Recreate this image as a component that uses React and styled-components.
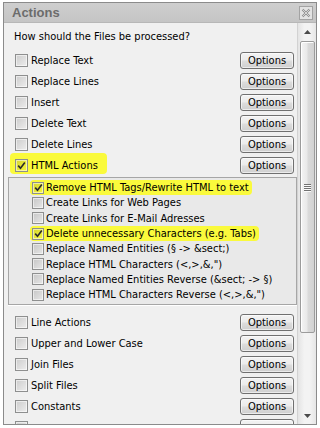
import React from "react"
import styled, { createGlobalStyle } from "styled-components"

const GlobalStyle = createGlobalStyle`
  *, *::before, *::after {
    box-sizing: border-box;
  }
  html, body {
    margin: 0;
    background: #fff;
  }
  body {
    font-family: "DejaVu Sans Condensed", "Liberation Sans", Arial, sans-serif;
    font-size: 11px;
    color: #000;
  }
`

const Window = styled.div`
  margin: 2px 0 0 3px;
  width: 314px;
  height: 423px;
  border: 1px solid #8b8b8b;
  background: #f0f0f0;
  display: flex;
  flex-direction: column;
  overflow: hidden;
`

const TitleBar = styled.div`
  height: 20px;
  flex: none;
  display: flex;
  align-items: center;
  justify-content: space-between;
  padding: 0 3px 0 8px;
  background: linear-gradient(#cecece, #c5c5c5);
  border-bottom: 1px solid #b7b7b7;
`

const Title = styled.span`
  font-family: "Liberation Sans", Arial, sans-serif;
  font-size: 13px;
  font-weight: bold;
  color: #6c6c6c;
`

const Body = styled.div`
  flex: 1;
  min-height: 0;
  display: flex;
`

const Content = styled.div`
  flex: 1;
  overflow: hidden;
  padding: 7px 3px 0 10px;
  border-right: 1px solid #d2d2d2;
`

const Heading = styled.div`
  line-height: 13px;
  margin-bottom: 7px;
`

const Row = styled.div`
  height: 21px;
  flex: none;
  display: flex;
  align-items: center;
  justify-content: space-between;
  padding-left: 1px;
`

const Mark = styled.span`
  display: inline-flex;
  align-items: center;
  gap: ${p => p.$gap}px;
  ${p =>
    p.$on &&
    `
    background: #fafa3c;
    border-radius: 4px;
    padding: ${p.$pad};
    margin: ${p.$neg};
  `}
`

const Box = styled.span`
  width: ${p => p.$size}px;
  height: ${p => p.$size}px;
  flex: none;
  border: 1px solid #8e8f8f;
  background: linear-gradient(135deg, rgba(0, 0, 0, 0.15), rgba(0, 0, 0, 0.01));
  box-shadow: inset 0 0 0 1px rgba(255, 255, 255, 0.55);
  display: flex;
  align-items: center;
  justify-content: center;
`

const OptionsButton = styled.button`
  width: 54px;
  height: 17px;
  padding: 0;
  font: inherit;
  color: #000;
  border: 1px solid #707070;
  border-radius: 3px;
  background: linear-gradient(#f3f3f3 0%, #ebebeb 48%, #dddddd 52%, #cfcfcf 100%);
  box-shadow: inset 0 0 0 1px rgba(255, 255, 255, 0.6);
`

const SubPanel = styled.div`
  margin: 1px -3px 7px -6px;
  padding: 2px 0 2px 23px;
  border: 1px solid #a6a6a6;
  background: #e9e9e9;
  box-shadow: 0 1px 0 #fff;
`

const SubItem = styled.div`
  height: 15.3px;
  display: flex;
  align-items: center;
`

const ScrollBar = styled.div`
  width: 18px;
  flex: none;
  display: flex;
  flex-direction: column;
  background: linear-gradient(90deg, #e4e4e4, #f3f3f3 35%, #f3f3f3 65%, #e6e6e6);
`

const ArrowButton = styled.div`
  height: 17px;
  flex: none;
  display: flex;
  align-items: center;
  justify-content: center;
  padding-left: 1px;
`

const Track = styled.div`
  flex: 1;
  padding: 1px 1px 0 2px;
`

const Thumb = styled.div`
  height: 292px;
  border: 1px solid #9b9b9b;
  border-radius: 2px;
  background: linear-gradient(90deg, #f4f4f4, #e9e9e9 45%, #dadada 55%, #d2d2d2);
  box-shadow: inset 1px 1px 0 #fff;
  display: flex;
  flex-direction: column;
  align-items: center;
  justify-content: center;
  gap: 1px;
`

const Grip = styled.span`
  width: 7px;
  height: 1px;
  background: #727272;
  box-shadow: 0 1px 0 #fafafa;
`

const CloseIcon = () => (
  <svg width="14" height="14" viewBox="0 0 14 14">
    <rect x="0.5" y="0.5" width="13" height="13" fill="#e3e3e3" stroke="#a3a3a3" />
    <path d="M3.5 3.5 L10.5 10.5 M10.5 3.5 L3.5 10.5" stroke="#8d8d8d" strokeWidth="2.2" />
    <path d="M3.5 3.5 L10.5 10.5 M10.5 3.5 L3.5 10.5" stroke="#f4f4f4" strokeWidth="0.7" />
  </svg>
)

const Arrow = ({ down }) => (
  <svg width="7" height="4" viewBox="0 0 7 4">
    <path d={down ? "M0 0 H7 L3.5 4 Z" : "M0 4 H7 L3.5 0 Z"} fill="#4b4b4b" />
  </svg>
)

const Check = () => (
  <svg width="9" height="9" viewBox="0 0 9 9">
    <path d="M1.2 4.6 L3.5 7.2 L7.8 1.4" fill="none" stroke="#2a2a2a" strokeWidth="1.6" />
  </svg>
)

const CheckBox = ({ size, checked }) => <Box $size={size}>{checked && <Check />}</Box>

const topItems = ["Replace Text", "Replace Lines", "Insert", "Delete Text", "Delete Lines"]

const htmlItems = [
  { label: "Remove HTML Tags/Rewrite HTML to text", checked: true },
  { label: "Create Links for Web Pages" },
  { label: "Create Links for E-Mail Adresses" },
  { label: "Delete unnecessary Characters (e.g. Tabs)", checked: true },
  { label: "Replace Named Entities (§ -> &sect;)" },
  { label: "Replace HTML Characters (<,>,&,\")" },
  { label: "Replace Named Entities Reverse (&sect; -> §)" },
  { label: "Replace HTML Characters Reverse (<,>,&,\")" },
]

const bottomItems = ["Line Actions", "Upper and Lower Case", "Join Files", "Split Files", "Constants"]

const ActionRow = ({ label, checked, marked, children = "Options" }) => (
  <Row>
    <Mark $gap={3} $on={marked} $pad="6px 9px 2px 5px" $neg="-6px -9px -2px -5px">
      <CheckBox size={13} checked={checked} />
      {label && <span>{label}</span>}
    </Mark>
    <OptionsButton>{children}</OptionsButton>
  </Row>
)

export default function App() {
  return (
    <>
      <GlobalStyle />
      <Window>
        <TitleBar>
          <Title>Actions</Title>
          <CloseIcon />
        </TitleBar>
        <Body>
          <Content>
            <Heading>How should the Files be processed?</Heading>
            {topItems.map(item => (
              <ActionRow key={item} label={item} />
            ))}
            <ActionRow label="HTML Actions" checked marked />
            <SubPanel>
              {htmlItems.map(item => (
                <SubItem key={item.label}>
                  <Mark $gap={2} $on={item.checked} $pad="1px 3px 1px 2px" $neg="-1px -3px -1px -2px">
                    <CheckBox size={12} checked={item.checked} />
                    <span>{item.label}</span>
                  </Mark>
                </SubItem>
              ))}
            </SubPanel>
            {bottomItems.map(item => (
              <ActionRow key={item} label={item} />
            ))}
            <ActionRow>{""}</ActionRow>
          </Content>
          <ScrollBar>
            <ArrowButton>
              <Arrow />
            </ArrowButton>
            <Track>
              <Thumb>
                <Grip />
                <Grip />
                <Grip />
                <Grip />
              </Thumb>
            </Track>
            <ArrowButton>
              <Arrow down />
            </ArrowButton>
          </ScrollBar>
        </Body>
      </Window>
    </>
  )
}
